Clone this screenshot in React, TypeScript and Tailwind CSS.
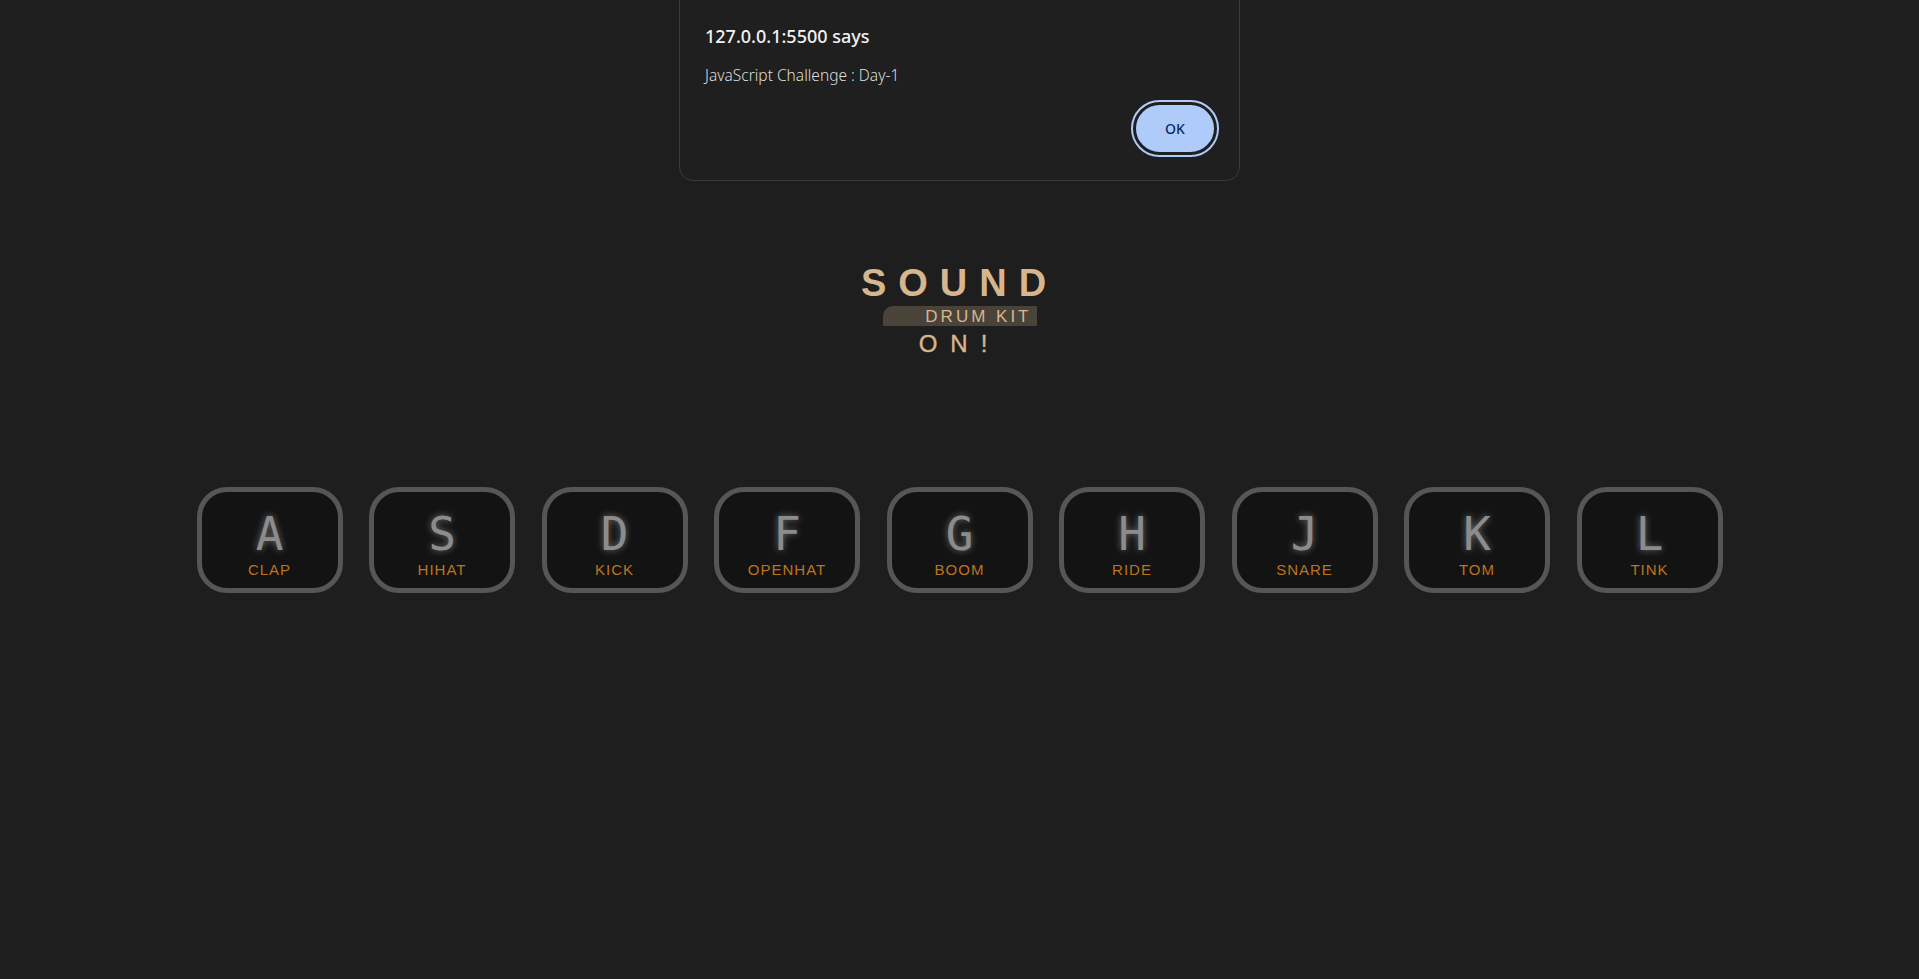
const keys = [
  { key: "A", sound: "clap" },
  { key: "S", sound: "hihat" },
  { key: "D", sound: "kick" },
  { key: "F", sound: "openhat" },
  { key: "G", sound: "boom" },
  { key: "H", sound: "ride" },
  { key: "J", sound: "snare" },
  { key: "K", sound: "tom" },
  { key: "L", sound: "tink" },
];

const AlertDialog = () => (
  <div className="absolute left-[679px] top-[-14px] flex h-[195px] w-[561px] flex-col rounded-[14px] border border-[#3d3934] bg-[#1f1f1f] px-[25px] pt-[36px] font-['Noto_Sans',sans-serif]">
    <p className="text-[18px] leading-[26px] font-medium text-[#f2f2f2]">
      127.0.0.1:5500 says
    </p>
    <p className="mt-[16px] text-[15.5px] leading-[20px] font-light text-[#dcdcdc]">
      JavaScript Challenge : Day-1
    </p>
    <div className="mt-[17px] flex justify-end pr-0">
      <button className="mr-[-3px] h-[53px] w-[84px] rounded-full border-[3px] border-[#1f1f1f] bg-[#aecbfa] text-[14px] font-medium text-[#0b2a5c] outline-2 outline-[#aecbfa]">
        OK
      </button>
    </div>
  </div>
);

const Key = ({ letter, sound }: { letter: string; sound: string }) => (
  <div className="flex h-[106px] w-[146px] flex-col items-center rounded-[30px] border-[5px] border-[#565656] bg-[#131313]">
    <kbd className="mt-[18px] font-['DejaVu_Sans_Mono',monospace] text-[46px] leading-[48px] text-[#8c8c8c] [text-shadow:0_0_7px_rgba(255,255,255,0.4)]">
      {letter}
    </kbd>
    <span className="mt-[4px] font-['Liberation_Sans',sans-serif] text-[15px] leading-[16px] tracking-[1px] text-[#bd741d] uppercase">
      {sound}
    </span>
  </div>
);

export default function App() {
  return (
    <div className="relative min-h-screen bg-[#1e1e1e] font-['Liberation_Sans',sans-serif]">
      <AlertDialog />
      <main className="flex flex-col items-center pt-[264px]">
        <h1 className="text-[38px] leading-none font-bold tracking-[12px] text-[#d6b68e]">
          SOUND
        </h1>
        <div className="mt-[4px] flex h-[20px] w-[154px] items-center justify-end rounded-tl-[10px] bg-[#4a433a] pr-[5px]">
          <span className="text-[17px] leading-none tracking-[3px] text-[#d6b68e]">
            DRUM KIT
          </span>
        </div>
        <p className="mt-[6px] text-[24px] leading-none tracking-[13px] text-[#d6b68e] [-webkit-text-stroke:0.4px_#d6b68e]">
          ON!
        </p>
        <section className="mt-[131px] flex gap-[26.5px]">
          {keys.map((k) => (
            <Key key={k.key} letter={k.key} sound={k.sound} />
          ))}
        </section>
      </main>
    </div>
  );
}
